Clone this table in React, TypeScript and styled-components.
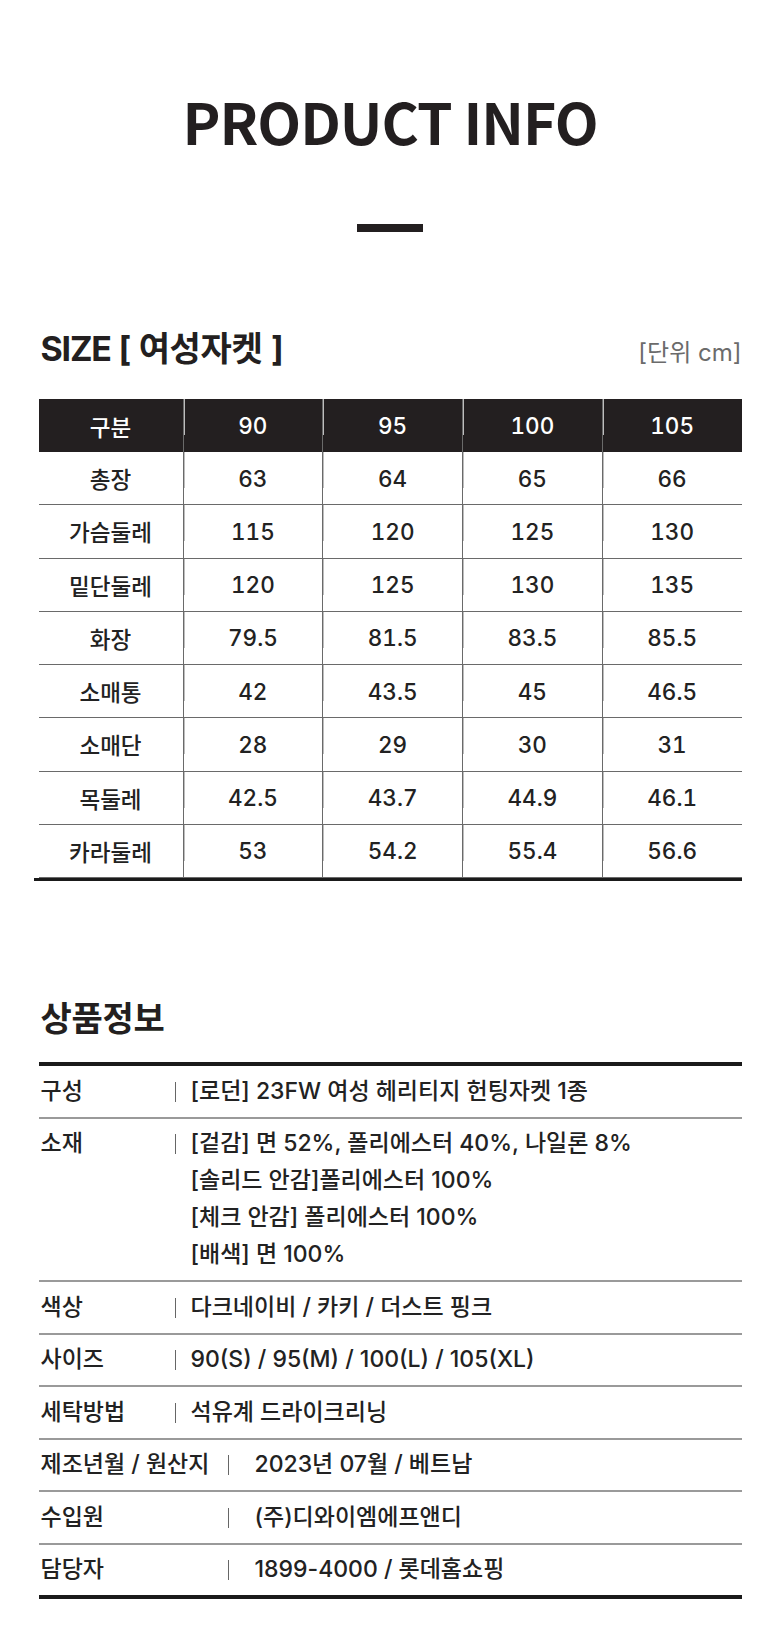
import React from 'react';
import styled, { createGlobalStyle } from 'styled-components';

const GlobalStyle = createGlobalStyle`
  html, body { margin: 0; padding: 0; background: #fff; }
  body {
    font-family: Inter, "Noto Sans CJK KR", "Noto Sans", sans-serif;
    color: #222;
  }
  * { box-sizing: border-box; }
`;

const Page = styled.main`
  width: 780px;
  min-height: 1648px;
  display: flex;
  flex-direction: column;
  align-items: center;
  padding: 91px 0 50px;
`;

const Title = styled.h1`
  margin: 0;
  font-family: "Noto Sans CJK KR", "Noto Sans", sans-serif;
  font-size: 57px;
  line-height: 59px;
  font-weight: 700;
  letter-spacing: -1px;
  color: #231f20;
`;

const Dash = styled.div`
  width: 66px;
  height: 8px;
  background: #231f20;
  margin-top: 74px;
`;

const Section = styled.section<{ $top: number }>`
  width: 703px;
  display: flex;
  flex-direction: column;
  margin-top: ${(p) => p.$top}px;
`;

const SectionHead = styled.div`
  display: flex;
  justify-content: space-between;
  align-items: baseline;
  padding-left: 2px;
`;

const Heading = styled.h2`
  margin: 0;
  font-family: "Noto Sans CJK KR", "Noto Sans", sans-serif;
  font-size: 34px;
  line-height: 34px;
  font-weight: 700;
  color: #231f20;
  letter-spacing: -0.3px;
  word-spacing: 1px;
`;

const HeadLatin = styled.span`
  font-family: Inter, "Noto Sans CJK KR", sans-serif;
  letter-spacing: -1.2px;
`;

const Unit = styled.span`
  font-size: 24px;
  color: #6b6b6b;
`;

const SizeTable = styled.div`
  margin-top: 31px;
  display: flex;
  flex-direction: column;
`;

const TRow = styled.div<{ $head?: boolean }>`
  display: grid;
  grid-template-columns: 144px repeat(4, 1fr);
  height: ${(p) => (p.$head ? '53px' : '53.25px')};
  background: ${(p) => (p.$head ? '#231f20' : '#fff')};
  border-bottom: ${(p) => (p.$head ? 'none' : '1px solid #6a6a6a')};
  &:last-of-type {
    border-bottom: none;
  }
`;

const Cell = styled.div<{ $head?: boolean }>`
  display: flex;
  align-items: center;
  justify-content: center;
  font-size: 22.5px;
  font-weight: 500;
  font-variant-numeric: tabular-nums;
  color: ${(p) => (p.$head ? '#fff' : '#222')};
  & + & {
    ${(p) =>
      p.$head
        ? 'background: linear-gradient(#bdbdbd, #bdbdbd) left top / 1px 36px no-repeat;'
        : 'border-left: 1px solid #6a6a6a;'}
  }
`;

const BottomRule = styled.div`
  width: 708px;
  height: 3px;
  margin-left: -5px;
  background: #1a1a1a;
`;

const InfoList = styled.div`
  margin-top: 28px;
  border-top: 4px solid #1a1a1a;
  border-bottom: 4px solid #1a1a1a;
`;

const InfoRow = styled.div<{ $label: number; $gap: number }>`
  display: grid;
  grid-template-columns: ${(p) => p.$label}px 1px 1fr;
  align-items: start;
  padding: 6.75px 0 6.75px 2px;
  border-bottom: 2px solid #9a9a9a;
  font-size: 23px;
  font-weight: 500;
  line-height: 37px;
  color: #222;
  &:last-child {
    border-bottom: none;
  }
  & > :last-child {
    padding-left: ${(p) => p.$gap}px;
  }
`;

const Label = styled.div`
  white-space: nowrap;
`;

const Separator = styled.span`
  width: 1px;
  height: 20px;
  margin-top: 9px;
  background: #666;
`;

const Value = styled.div`
  display: flex;
  flex-direction: column;
`;

const headers = ['구분', '90', '95', '100', '105'];
const rows: string[][] = [
  ['총장', '63', '64', '65', '66'],
  ['가슴둘레', '115', '120', '125', '130'],
  ['밑단둘레', '120', '125', '130', '135'],
  ['화장', '79.5', '81.5', '83.5', '85.5'],
  ['소매통', '42', '43.5', '45', '46.5'],
  ['소매단', '28', '29', '30', '31'],
  ['목둘레', '42.5', '43.7', '44.9', '46.1'],
  ['카라둘레', '53', '54.2', '55.4', '56.6'],
];

const info: { label: string; lines: string[]; wide?: boolean }[] = [
  { label: '구성', lines: ['[로던] 23FW 여성 헤리티지 헌팅자켓 1종'] },
  {
    label: '소재',
    lines: [
      '[겉감] 면 52%, 폴리에스터 40%, 나일론 8%',
      '[솔리드 안감]폴리에스터 100%',
      '[체크 안감] 폴리에스터 100%',
      '[배색] 면 100%',
    ],
  },
  { label: '색상', lines: ['다크네이비 / 카키 / 더스트 핑크'] },
  { label: '사이즈', lines: ['90(S) / 95(M) / 100(L) / 105(XL)'] },
  { label: '세탁방법', lines: ['석유계 드라이크리닝'] },
  { label: '제조년월 / 원산지', lines: ['2023년 07월 / 베트남'], wide: true },
  { label: '수입원', lines: ['(주)디와이엠에프앤디'], wide: true },
  { label: '담당자', lines: ['1899-4000 / 롯데홈쇼핑'], wide: true },
];

export default function App() {
  return (
    <>
      <GlobalStyle />
      <Page>
        <Title>PRODUCT INFO</Title>
        <Dash />
        <Section $top={98}>
          <SectionHead>
            <Heading>
              <HeadLatin>SIZE [</HeadLatin> 여성자켓 <HeadLatin>]</HeadLatin>
            </Heading>
            <Unit>[단위 cm]</Unit>
          </SectionHead>
          <SizeTable>
            <TRow $head>
              {headers.map((h) => (
                <Cell $head key={h}>
                  {h}
                </Cell>
              ))}
            </TRow>
            {rows.map((r) => (
              <TRow key={r[0]}>
                {r.map((c, i) => (
                  <Cell key={i}>{c}</Cell>
                ))}
              </TRow>
            ))}
            <BottomRule />
          </SizeTable>
        </Section>
        <Section $top={119}>
          <SectionHead>
            <Heading>상품정보</Heading>
          </SectionHead>
          <InfoList>
            {info.map((row) => (
              <InfoRow
                key={row.label}
                $label={row.wide ? 187 : 134}
                $gap={row.wide ? 26 : 15}
              >
                <Label>{row.label}</Label>
                <Separator />
                <Value>
                  {row.lines.map((l) => (
                    <span key={l}>{l}</span>
                  ))}
                </Value>
              </InfoRow>
            ))}
          </InfoList>
        </Section>
      </Page>
    </>
  );
}
